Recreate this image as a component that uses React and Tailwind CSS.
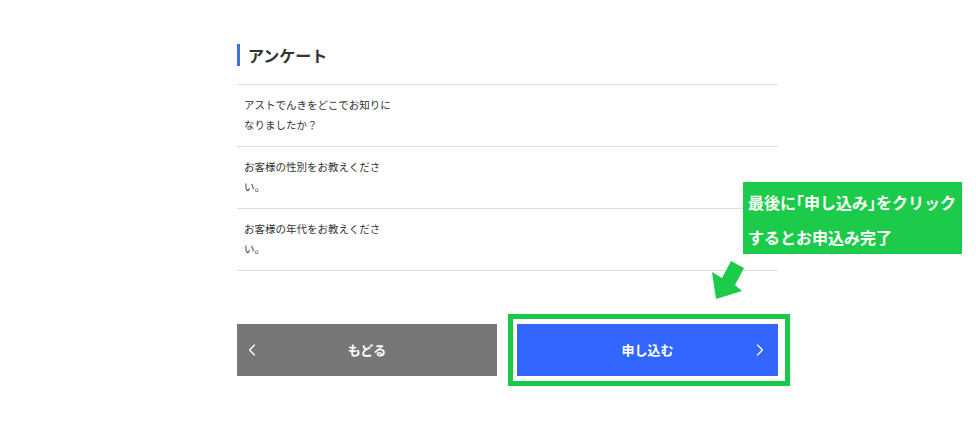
import { ChevronLeft, ChevronRight } from "lucide-react";

const questions = [
  "アストでんきをどこでお知りになりましたか？",
  "お客様の性別をお教えください。",
  "お客様の年代をお教えください。",
];

export default function App() {
  return (
    <div
      className="relative w-[976px] h-[433px] bg-white overflow-hidden text-[#333]"
      style={{ fontFamily: '"Noto Sans CJK JP", "Noto Sans", sans-serif' }}
    >
      <div className="ml-[237px] w-[541px] pt-[44px]">
        {/* heading */}
        <div className="flex items-center h-[22px] border-l-[3px] border-[#3b6fe6] pl-[8px]">
          <h2 className="text-[16px] font-bold leading-none">アンケート</h2>
        </div>

        <div className="mt-[18px] border-t border-[#dedede]">
          {questions.map((q) => (
            <div key={q} className="border-b border-[#dedede] pt-[10px] pb-[11px] pl-[7px]">
              <p className="w-[150px] text-[10.5px] leading-[20px]">{q}</p>
            </div>
          ))}
        </div>

        {/* buttons */}
        <div className="mt-[53px] flex gap-[20px]">
          <button className="relative flex items-center justify-center w-[260px] h-[52px] bg-[#777777] text-white text-[13px] font-bold">
            <ChevronLeft className="absolute left-[5px] w-[20px] h-[20px]" strokeWidth={1.5} />
            もどる
          </button>
          <div className="relative">
            <button className="relative flex items-center justify-center w-[261px] h-[52px] bg-[#3366ff] text-white text-[13px] font-bold">
              申し込む
              <ChevronRight className="absolute right-[8px] w-[20px] h-[20px]" strokeWidth={1.5} />
            </button>
            <span className="absolute -left-[9px] -right-[12px] -top-[10px] -bottom-[10px] border-[5px] border-[#19c94a] pointer-events-none" />
          </div>
        </div>
      </div>

      {/* annotation */}
      <div className="absolute left-[743px] top-[182px] w-[219px] h-[72px] bg-[#1ccb4a] pl-[5px] pt-[3px] text-white text-[16px] font-bold leading-[35px] whitespace-nowrap">
        <p>
          最後に<span className="[font-feature-settings:'halt']">「</span>申し込み
          <span className="[font-feature-settings:'halt']">」</span>をクリック
        </p>
        <p>するとお申込み完了</p>
      </div>

      <svg
        className="absolute left-[705px] top-[255px]"
        width="45"
        height="47"
        viewBox="705 255 45 47"
      >
        <polygon
          points="716,299 712,272 722,278 731,261 744,268 735,285 742,291"
          fill="#1ccb4a"
        />
      </svg>
    </div>
  );
}
